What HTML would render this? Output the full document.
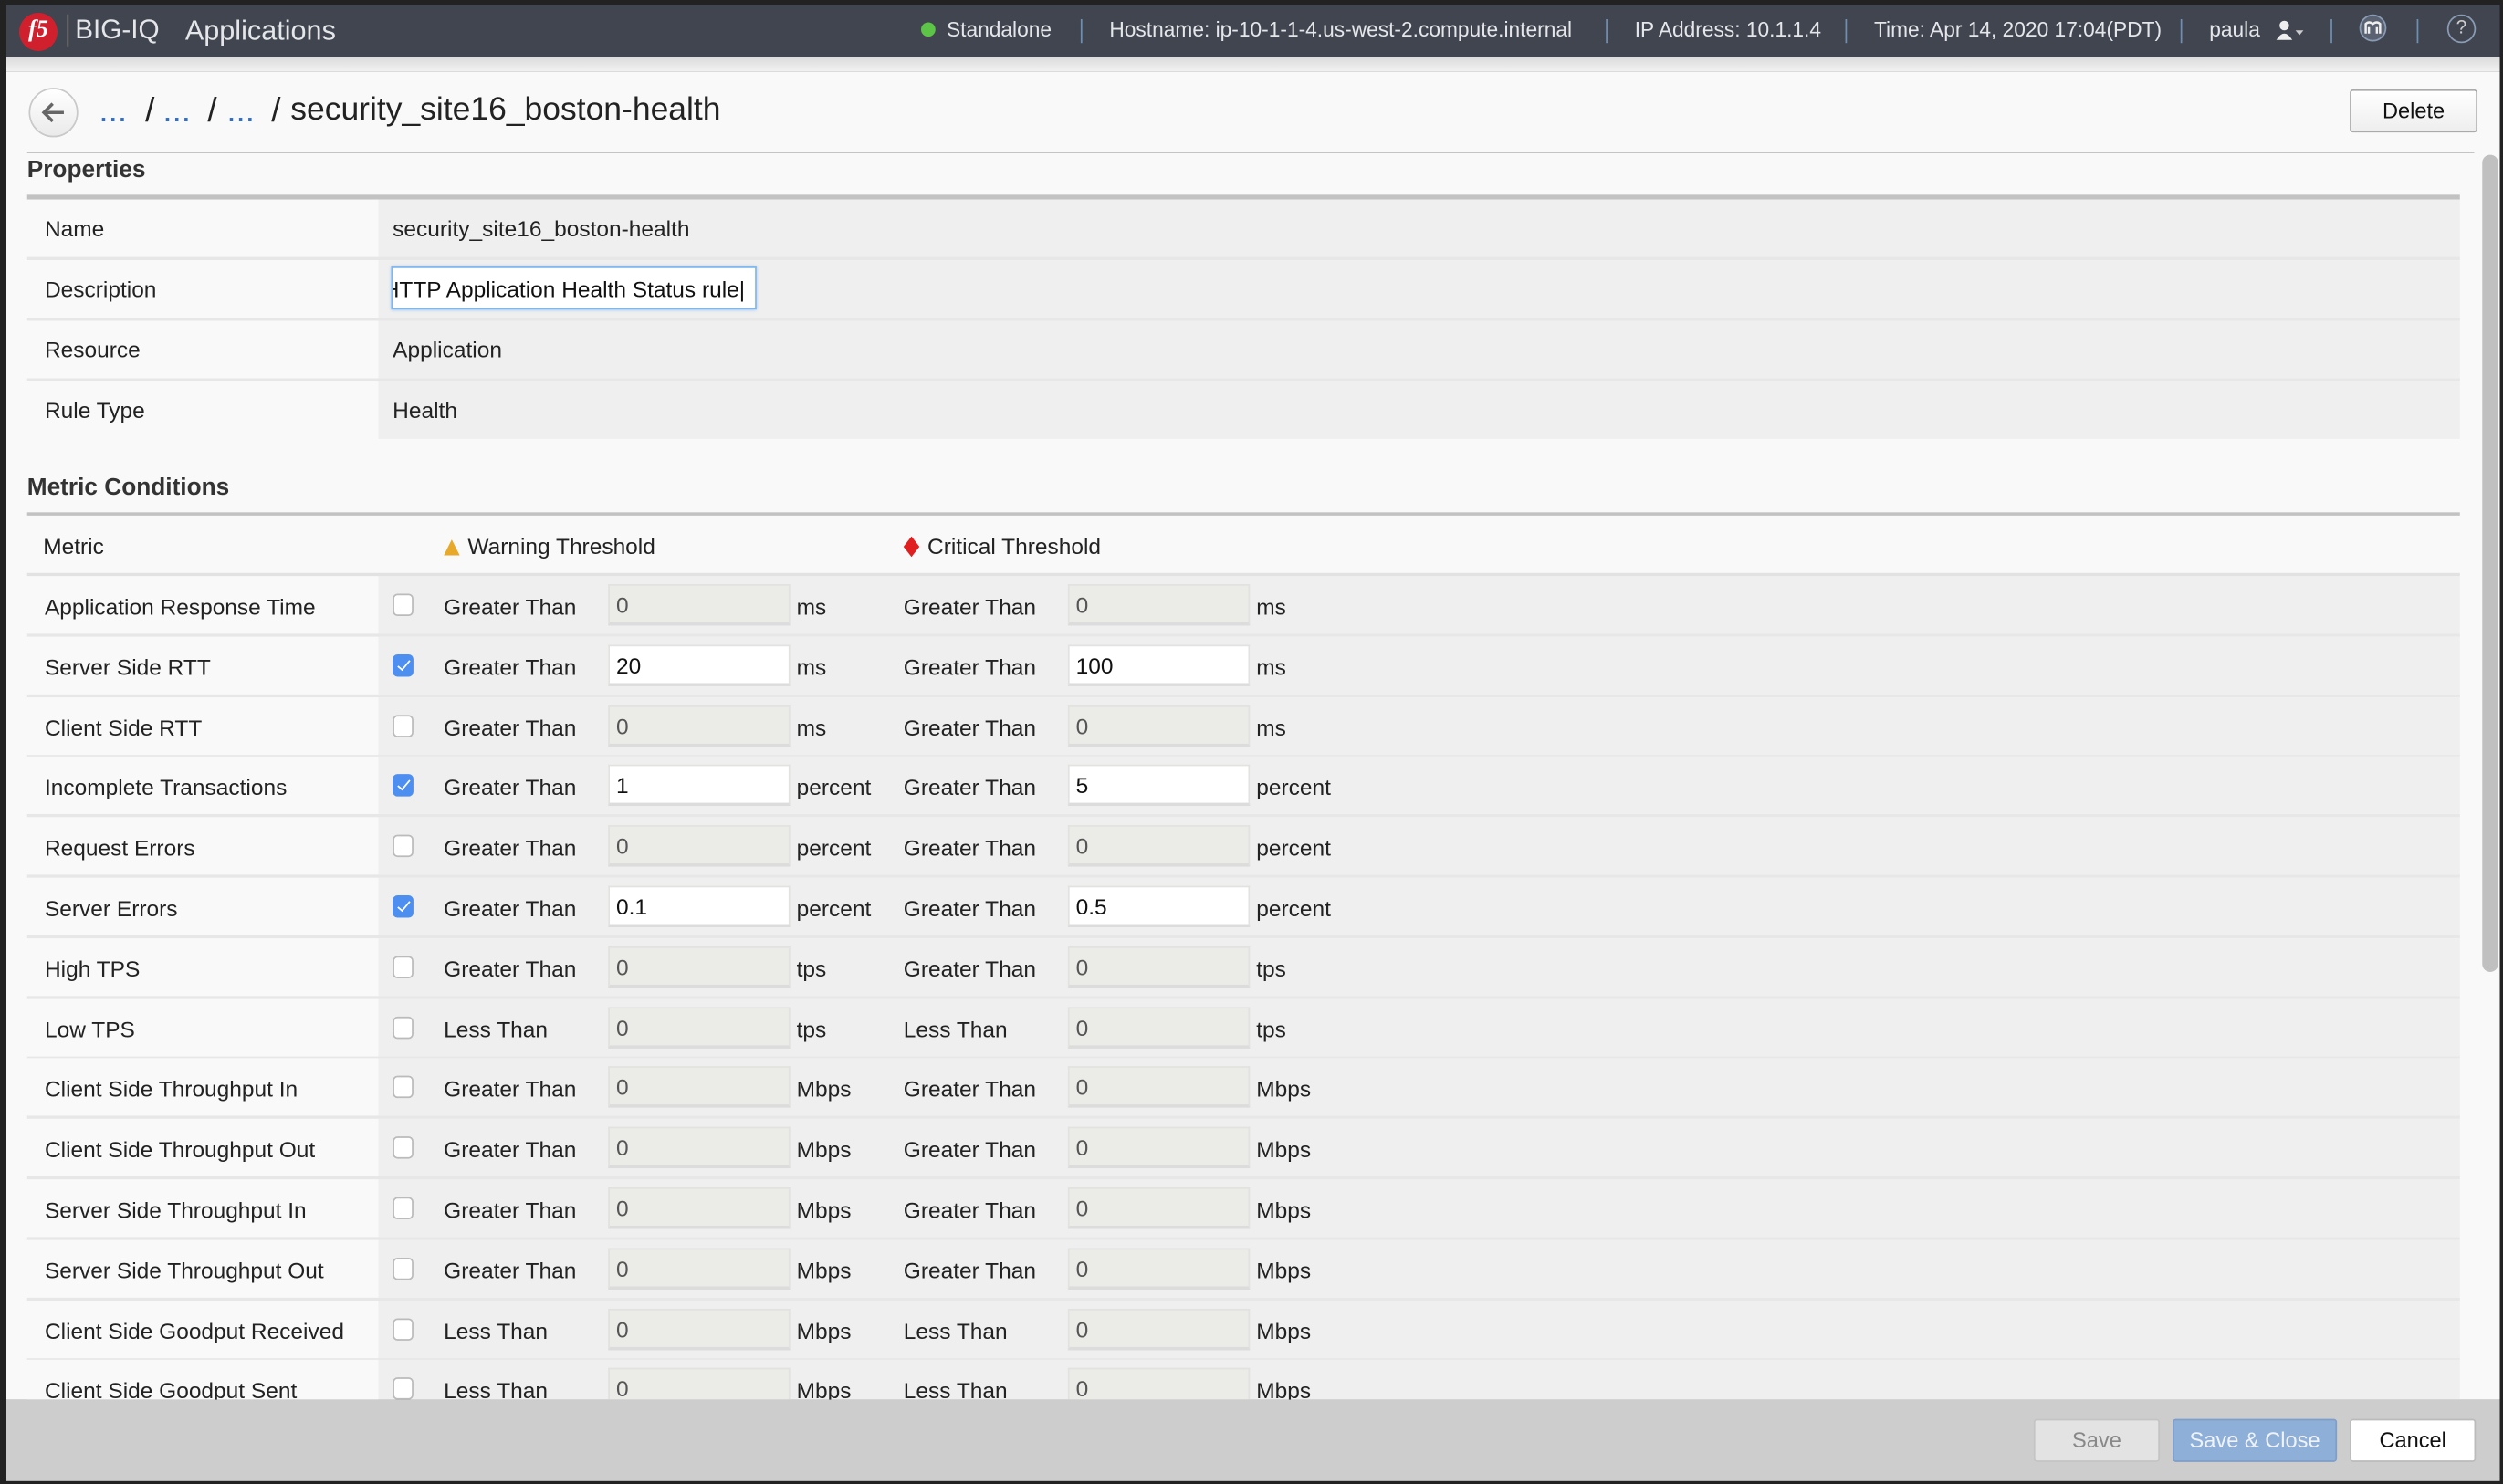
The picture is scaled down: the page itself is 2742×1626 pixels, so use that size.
<!DOCTYPE html>
<html><head><meta charset="utf-8">
<style>
*{box-sizing:border-box;margin:0;padding:0}
html,body{width:2742px;height:1626px;overflow:hidden;background:#1a1a1a}
#w{position:absolute;left:0;top:0;width:1568px;height:930px;transform:scale(1.748724);transform-origin:0 0;font-family:"Liberation Sans",sans-serif;font-size:14px;color:#222;background:#222}
.a{position:absolute;white-space:nowrap}
#top{position:absolute;left:4px;top:3px;width:1562px;height:33px;background:#41454f;color:#e4e6ea}
#grad{position:absolute;left:4px;top:36px;width:1562px;height:9px;background:linear-gradient(#dcdcdc,#f2f2f2)}
#main{position:absolute;left:4px;top:45px;width:1562px;height:832px;background:#f9f9f9;overflow:hidden}
.sep{position:absolute;top:9px;width:1px;height:15px;background:#6d8fb5}
.row{position:absolute;left:13px;width:1524px;height:37.8px;border-bottom:2px solid #e7e7e7}
.row .l{position:absolute;left:0;top:0;width:220px;height:36px;background:#f9f9f9}
.row .v{position:absolute;left:220px;top:0;right:0;height:36px;background:#efefef}
.row span{position:absolute;top:11px;white-space:nowrap}
.prow span{top:10px}
.cb{position:absolute;left:229px;top:11px;width:13px;height:14px;border:1px solid #bbb;border-radius:3px;background:#fff}
.cb.on{background:#4d8ff0;border-color:#4d8ff0}
.cb.on:after{content:"";position:absolute;left:4px;top:1px;width:3px;height:7px;border:solid #fff;border-width:0 1.5px 1.5px 0;transform:rotate(40deg)}
.in{position:absolute;top:5px;width:114px;height:26px;background:#ebebe7;border:1px solid #e2e2e0;border-bottom:2px solid #dcdcdc;padding:4px 4px;color:#555}
.in.on{background:#fff;color:#111}
.btn{position:absolute;height:27px;border-radius:2px;text-align:center;line-height:25px;font-size:13.5px}
.bc{position:absolute;top:13px;font-size:21px;white-space:nowrap}
</style></head><body><div id="w">
<div id="top">
 <div class="a" style="left:8px;top:5px;width:24px;height:24px;border-radius:50%;background:#d0202e;color:#fff;font:bold italic 15px 'Liberation Serif',serif;text-align:center;line-height:23px">f5</div>
 <div class="a" style="left:38px;top:6px;width:1px;height:20px;background:#777"></div>
 <div class="a" style="left:43px;top:6px;font-size:17px">BIG-IQ</div>
 <div class="a" style="left:112px;top:6px;font-size:17.5px">Applications</div>
 <div class="a" style="left:573px;top:11px;width:9px;height:9px;border-radius:50%;background:#5cc447"></div>
 <div class="a" style="left:589px;top:8px;font-size:13px">Standalone</div>
 <div class="sep" style="left:673px"></div>
 <div class="a" style="left:691px;top:8px;font-size:13px">Hostname: ip-10-1-1-4.us-west-2.compute.internal</div>
 <div class="sep" style="left:1002px"></div>
 <div class="a" style="left:1020px;top:8px;font-size:13px">IP Address: 10.1.1.4</div>
 <div class="sep" style="left:1152px"></div>
 <div class="a" style="left:1170px;top:8px;font-size:13px">Time: Apr 14, 2020 17:04(PDT)</div>
 <div class="sep" style="left:1362px"></div>
 <div class="a" style="left:1380px;top:8px;font-size:13px">paula</div>
 <svg class="a" style="left:1421px;top:9px" width="20" height="14"><circle cx="6" cy="4" r="3" fill="#eee"/><path d="M1 13 Q6 5 11 13Z" fill="#eee"/><path d="M13 7h5l-2.5 3z" fill="#ccc"/></svg>
 <div class="sep" style="left:1456px"></div>
 <div class="a" style="left:1474px;top:6px;width:17px;height:17px;border-radius:50%;border:1.5px solid #8a9bb5;background:#5a6272"></div>
 <svg class="a" style="left:1477px;top:10px" width="11" height="9"><path d="M1 8V2Q3 0 5.5 2Q8 0 10 2V8M3 8V4M8 8V4" stroke="#eee" stroke-width="1.4" fill="none"/></svg>
 <div class="sep" style="left:1510px"></div>
 <div class="a" style="left:1529px;top:6px;width:18px;height:18px;border-radius:50%;border:1.5px solid #8a9bb5;color:#ccc;font-size:12px;text-align:center;line-height:15px">?</div>
</div>
<div id="grad"></div>
<div id="main">
 <div class="a" style="left:14px;top:10px;width:31px;height:31px;border-radius:50%;border:1px solid #c9c9c9;background:linear-gradient(#fff,#eaeaea)"></div>
 <svg class="a" style="left:21px;top:17px" width="17" height="17"><path d="M15 8.5H3M8 3L2.5 8.5 8 14" stroke="#666" stroke-width="2" fill="none"/></svg>
 <div class="bc" style="left:58px;color:#2f6ec9">...</div>
 <div class="bc" style="left:87px">/</div>
 <div class="bc" style="left:98px;color:#2f6ec9">...</div>
 <div class="bc" style="left:126px">/</div>
 <div class="bc" style="left:138px;color:#2f6ec9">...</div>
 <div class="bc" style="left:166px">/</div>
 <div class="bc" style="left:178px;font-size:20.3px">security_site16_boston-health</div>
 <div class="btn" style="left:1468px;top:11px;width:80px;border:1px solid #aaa;background:linear-gradient(#fff,#eee);color:#111">Delete</div>
 <div class="a" style="left:13px;top:50px;width:1533px;height:1px;background:#bdbdbd"></div>
 <div class="a" style="left:13px;top:53px;font-size:15px;font-weight:bold;color:#333">Properties</div>
 <div class="a" style="left:13px;top:77px;width:1524px;height:3px;background:#c2c2c2"></div>
 <div class="row prow" style="top:80px"><div class="l"></div><div class="v"></div><span style="left:11px">Name</span><span style="left:229px">security_site16_boston-health</span></div>
 <div class="row prow" style="top:118px"><div class="l"></div><div class="v"></div><span style="left:11px">Description</span>
   <div class="a" style="left:228px;top:4px;width:229px;height:27px;background:#fff;border:1px solid #7fb6ee;box-shadow:0 0 2px #9cc6f0;overflow:hidden;padding:5px 0 0 0;color:#111"><div style="margin-left:-6px">HTTP Application Health Status rule|</div></div></div>
 <div class="row prow" style="top:156px"><div class="l"></div><div class="v"></div><span style="left:11px">Resource</span><span style="left:229px">Application</span></div>
 <div class="row prow" style="top:194px;border-bottom:none;height:36px"><div class="l"></div><div class="v"></div><span style="left:11px">Rule Type</span><span style="left:229px">Health</span></div>
 <div class="a" style="left:13px;top:252px;font-size:15px;font-weight:bold;color:#333">Metric Conditions</div>
 <div class="a" style="left:13px;top:276px;width:1524px;height:2px;background:#c2c2c2"></div>
 <div class="a" style="left:23px;top:289px">Metric</div>
 <svg class="a" style="left:274px;top:293px" width="10" height="10"><path d="M5 0L10 10H0Z" fill="#e8a82a"/></svg>
 <div class="a" style="left:289px;top:289px">Warning Threshold</div>
 <svg class="a" style="left:562px;top:291px" width="10" height="13"><path d="M5 0L10 6.5 5 13 0 6.5Z" fill="#e02020"/></svg>
 <div class="a" style="left:577px;top:289px">Critical Threshold</div>
 <div class="a" style="left:13px;top:314px;width:1524px;height:2px;background:#e2e2e2"></div>

 <div style="position:absolute;left:0;top:316px;width:1562px">
 <div class="row" style="position:relative;top:0"><div class="l"></div><div class="v"></div><span style="left:11px">Application Response Time</span><div class="cb"></div><span style="left:261px">Greater Than</span><div class="in" style="left:364px">0</div><span style="left:482px">ms</span><span style="left:549px">Greater Than</span><div class="in" style="left:652px">0</div><span style="left:770px">ms</span></div>
 <div class="row" style="position:relative;top:0"><div class="l"></div><div class="v"></div><span style="left:11px">Server Side RTT</span><div class="cb on"></div><span style="left:261px">Greater Than</span><div class="in on" style="left:364px">20</div><span style="left:482px">ms</span><span style="left:549px">Greater Than</span><div class="in on" style="left:652px">100</div><span style="left:770px">ms</span></div>
 <div class="row" style="position:relative;top:0"><div class="l"></div><div class="v"></div><span style="left:11px">Client Side RTT</span><div class="cb"></div><span style="left:261px">Greater Than</span><div class="in" style="left:364px">0</div><span style="left:482px">ms</span><span style="left:549px">Greater Than</span><div class="in" style="left:652px">0</div><span style="left:770px">ms</span></div>
 <div class="row" style="position:relative;top:0"><div class="l"></div><div class="v"></div><span style="left:11px">Incomplete Transactions</span><div class="cb on"></div><span style="left:261px">Greater Than</span><div class="in on" style="left:364px">1</div><span style="left:482px">percent</span><span style="left:549px">Greater Than</span><div class="in on" style="left:652px">5</div><span style="left:770px">percent</span></div>
 <div class="row" style="position:relative;top:0"><div class="l"></div><div class="v"></div><span style="left:11px">Request Errors</span><div class="cb"></div><span style="left:261px">Greater Than</span><div class="in" style="left:364px">0</div><span style="left:482px">percent</span><span style="left:549px">Greater Than</span><div class="in" style="left:652px">0</div><span style="left:770px">percent</span></div>
 <div class="row" style="position:relative;top:0"><div class="l"></div><div class="v"></div><span style="left:11px">Server Errors</span><div class="cb on"></div><span style="left:261px">Greater Than</span><div class="in on" style="left:364px">0.1</div><span style="left:482px">percent</span><span style="left:549px">Greater Than</span><div class="in on" style="left:652px">0.5</div><span style="left:770px">percent</span></div>
 <div class="row" style="position:relative;top:0"><div class="l"></div><div class="v"></div><span style="left:11px">High TPS</span><div class="cb"></div><span style="left:261px">Greater Than</span><div class="in" style="left:364px">0</div><span style="left:482px">tps</span><span style="left:549px">Greater Than</span><div class="in" style="left:652px">0</div><span style="left:770px">tps</span></div>
 <div class="row" style="position:relative;top:0"><div class="l"></div><div class="v"></div><span style="left:11px">Low TPS</span><div class="cb"></div><span style="left:261px">Less Than</span><div class="in" style="left:364px">0</div><span style="left:482px">tps</span><span style="left:549px">Less Than</span><div class="in" style="left:652px">0</div><span style="left:770px">tps</span></div>
 <div class="row" style="position:relative;top:0"><div class="l"></div><div class="v"></div><span style="left:11px">Client Side Throughput In</span><div class="cb"></div><span style="left:261px">Greater Than</span><div class="in" style="left:364px">0</div><span style="left:482px">Mbps</span><span style="left:549px">Greater Than</span><div class="in" style="left:652px">0</div><span style="left:770px">Mbps</span></div>
 <div class="row" style="position:relative;top:0"><div class="l"></div><div class="v"></div><span style="left:11px">Client Side Throughput Out</span><div class="cb"></div><span style="left:261px">Greater Than</span><div class="in" style="left:364px">0</div><span style="left:482px">Mbps</span><span style="left:549px">Greater Than</span><div class="in" style="left:652px">0</div><span style="left:770px">Mbps</span></div>
 <div class="row" style="position:relative;top:0"><div class="l"></div><div class="v"></div><span style="left:11px">Server Side Throughput In</span><div class="cb"></div><span style="left:261px">Greater Than</span><div class="in" style="left:364px">0</div><span style="left:482px">Mbps</span><span style="left:549px">Greater Than</span><div class="in" style="left:652px">0</div><span style="left:770px">Mbps</span></div>
 <div class="row" style="position:relative;top:0"><div class="l"></div><div class="v"></div><span style="left:11px">Server Side Throughput Out</span><div class="cb"></div><span style="left:261px">Greater Than</span><div class="in" style="left:364px">0</div><span style="left:482px">Mbps</span><span style="left:549px">Greater Than</span><div class="in" style="left:652px">0</div><span style="left:770px">Mbps</span></div>
 <div class="row" style="position:relative;top:0"><div class="l"></div><div class="v"></div><span style="left:11px">Client Side Goodput Received</span><div class="cb"></div><span style="left:261px">Less Than</span><div class="in" style="left:364px">0</div><span style="left:482px">Mbps</span><span style="left:549px">Less Than</span><div class="in" style="left:652px">0</div><span style="left:770px">Mbps</span></div>
 <div class="row" style="position:relative;top:0"><div class="l"></div><div class="v"></div><span style="left:11px">Client Side Goodput Sent</span><div class="cb"></div><span style="left:261px">Less Than</span><div class="in" style="left:364px">0</div><span style="left:482px">Mbps</span><span style="left:549px">Less Than</span><div class="in" style="left:652px">0</div><span style="left:770px">Mbps</span></div>
 </div>
 <div class="a" style="left:1551px;top:52px;width:10px;height:512px;border-radius:5px;background:#c0c0c0"></div>
</div>
<div class="a" style="left:4px;top:877px;width:1562px;height:51px;background:#cdcdcd"></div>
<div class="btn" style="left:1274px;top:889px;width:79px;background:#e3e3e3;border:1px solid #c4c4c4;color:#888">Save</div>
<div class="btn" style="left:1361px;top:889px;width:103px;background:#8eafd8;border:1px solid #7f9fc8;color:#eef3fa">Save &amp; Close</div>
<div class="btn" style="left:1472px;top:889px;width:79px;background:#fff;border:1px solid #bbb;color:#111">Cancel</div>
</div></body></html>
